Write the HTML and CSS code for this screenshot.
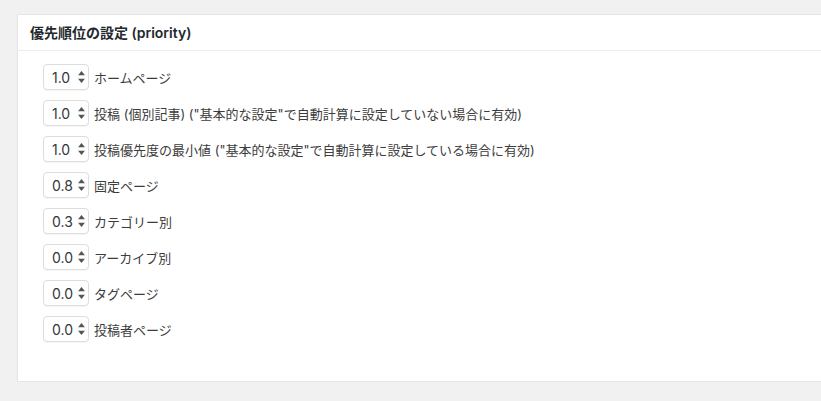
FILE: index.html
```html
<!DOCTYPE html>
<html lang="ja">

<head>
  <meta charset="UTF-8">
  <title>優先順位の設定</title>
  <link rel="stylesheet" href="styles.css">
</head>

<body>
  <div class="postbox">
    <h2 class="hndle">優先順位の設定 (priority)</h2>
    <div class="inside">
      <ul class="priority-list">
        <li>
          <span class="select-wrap"><select><option>1.0</option></select><svg class="arrows" viewBox="0 0 8 14"><path d="M4 0 L8 5 L0 5 Z M4 14 L8 9 L0 9 Z"/></svg></span>
          <label>ホームページ</label>
        </li>
        <li>
          <span class="select-wrap"><select><option>1.0</option></select><svg class="arrows" viewBox="0 0 8 14"><path d="M4 0 L8 5 L0 5 Z M4 14 L8 9 L0 9 Z"/></svg></span>
          <label>投稿 (個別記事) ("基本的な設定"で自動計算に設定していない場合に有効)</label>
        </li>
        <li>
          <span class="select-wrap"><select><option>1.0</option></select><svg class="arrows" viewBox="0 0 8 14"><path d="M4 0 L8 5 L0 5 Z M4 14 L8 9 L0 9 Z"/></svg></span>
          <label>投稿優先度の最小値 ("基本的な設定"で自動計算に設定している場合に有効)</label>
        </li>
        <li>
          <span class="select-wrap"><select><option>0.8</option></select><svg class="arrows" viewBox="0 0 8 14"><path d="M4 0 L8 5 L0 5 Z M4 14 L8 9 L0 9 Z"/></svg></span>
          <label>固定ページ</label>
        </li>
        <li>
          <span class="select-wrap"><select><option>0.3</option></select><svg class="arrows" viewBox="0 0 8 14"><path d="M4 0 L8 5 L0 5 Z M4 14 L8 9 L0 9 Z"/></svg></span>
          <label>カテゴリー別</label>
        </li>
        <li>
          <span class="select-wrap"><select><option>0.0</option></select><svg class="arrows" viewBox="0 0 8 14"><path d="M4 0 L8 5 L0 5 Z M4 14 L8 9 L0 9 Z"/></svg></span>
          <label>アーカイブ別</label>
        </li>
        <li>
          <span class="select-wrap"><select><option>0.0</option></select><svg class="arrows" viewBox="0 0 8 14"><path d="M4 0 L8 5 L0 5 Z M4 14 L8 9 L0 9 Z"/></svg></span>
          <label>タグページ</label>
        </li>
        <li>
          <span class="select-wrap"><select><option>0.0</option></select><svg class="arrows" viewBox="0 0 8 14"><path d="M4 0 L8 5 L0 5 Z M4 14 L8 9 L0 9 Z"/></svg></span>
          <label>投稿者ページ</label>
        </li>
      </ul>
    </div>
  </div>
</body>

</html>
```

FILE: styles.css
```css
body {
  background-color: #f1f1f1;
  font-family: Inter, "Noto Sans CJK JP", sans-serif;
  margin: 0;
  padding: 14px 0 0 17px;
  color: #444;
  overflow: hidden;
}

.postbox {
  background: #fff;
  border: 1px solid #e5e5e5;
  border-right: none;
  box-shadow: 0 1px 1px rgba(0, 0, 0, 0.04);
}

.hndle {
  margin: 0;
  padding: 0 12px;
  height: 35px;
  line-height: 35px;
  font-size: 14px;
  font-weight: 600;
  color: #23282d;
  border-bottom: 1px solid #eee;
}

.inside {
  padding: 13px 0 39px 25px;
}

/* one row per priority */
.priority-list {
  list-style: none;
  margin: 0;
  padding: 0;
  display: flex;
  flex-direction: column;
  gap: 10px;
}

.priority-list li {
  display: flex;
  align-items: center;
  gap: 5px;
  height: 26px;
}

.priority-list label {
  font-size: 13px;
  color: #3c3c3c;
}

.select-wrap {
  position: relative;
  display: inline-block;
}

select {
  -webkit-appearance: none;
  appearance: none;
  width: 46px;
  height: 26px;
  box-sizing: border-box;
  border: 1px solid #ddd;
  border-radius: 4px;
  background: #fff;
  box-shadow: 0 1px 1px rgba(0, 0, 0, 0.04);
  font-family: Inter, sans-serif;
  font-size: 14px;
  color: #32373c;
  padding: 0 0 0 8px;
  margin: 0;
}

.arrows {
  position: absolute;
  left: 35px;
  top: 7px;
  width: 7px;
  height: 12px;
  fill: #555;
  pointer-events: none;
}
```
